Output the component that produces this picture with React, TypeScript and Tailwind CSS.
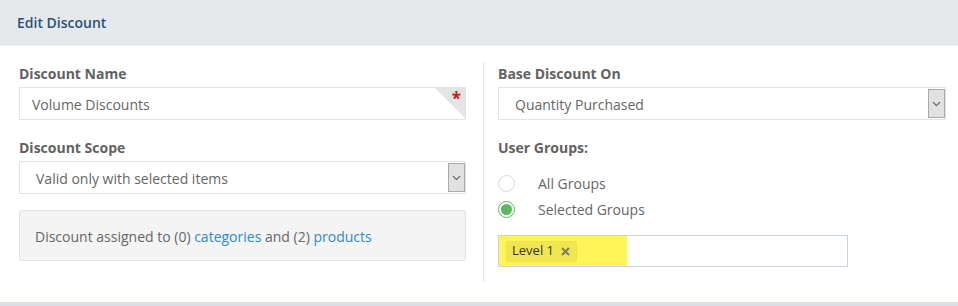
import React from "react";

function Chevron() {
  return (
    <svg width="9" height="6" viewBox="0 0 9 6" fill="none">
      <path d="M1 1.2 L4.5 4.6 L8 1.2" stroke="#555" strokeWidth="1.1" />
    </svg>
  );
}

function SelectBox({ value }: { value: string }) {
  return (
    <div className="flex h-[33px] items-stretch border border-[#e3e3e3] bg-white">
      <div className="flex flex-1 items-center pl-[16px] pt-[1px] text-[14px] text-[#666]">{value}</div>
      <div className="my-[1px] flex w-[17px] items-center justify-center border border-[#a9a9a9] bg-[#e1e1e1]">
        <Chevron />
      </div>
    </div>
  );
}

function Radio({ checked, label }: { checked?: boolean; label: string }) {
  return (
    <div className="flex h-[26px] items-center">
      {checked ? (
        <div className="flex h-[17px] w-[17px] items-center justify-center rounded-full border border-[#5cb85c] bg-white">
          <div className="h-[11px] w-[11px] rounded-full bg-[#5cb85c]" />
        </div>
      ) : (
        <div className="h-[17px] w-[17px] rounded-full border border-[#d9d9d9] bg-white" />
      )}
      <span className="ml-[23px] pt-[1px] text-[14px] text-[#666]">{label}</span>
    </div>
  );
}

export default function App() {
  return (
    <div
      className="w-[958px] h-[306px] bg-white border-b-4 border-[#dcdfe3]"
      style={{ fontFamily: '"Open Sans", "Liberation Sans", sans-serif' }}
    >
      <div className="flex h-[46px] items-center border-b border-[#eef0f2] bg-[#e6e9ec] pl-[17px]">
        <span className="text-[14px] font-semibold text-[#2b5278]">Edit Discount</span>
      </div>
      <div className="flex pt-[16px] pl-[19px]">
        <div className="w-[447px] pt-[1px]">
          <div className="flex h-[20px] items-center text-[14px] font-bold text-[#626262]">Discount Name</div>
          <div className="relative mt-[4px] flex h-[33px] items-center overflow-hidden border border-[#e3e3e3] bg-white pl-[12px] pt-[1px] text-[14px] text-[#666]">
            Volume Discounts
            <div className="absolute right-0 top-0 h-0 w-0 border-l-[30px] border-t-[30px] border-l-transparent border-t-[#e4e4e4]" />
            <span className="absolute right-[4px] top-[1px] text-[17px] font-bold leading-[20px] text-[#c81818]">*</span>
          </div>
          <div className="mt-[17px] flex h-[20px] items-center text-[14px] font-bold text-[#626262]">Discount Scope</div>
          <div className="mt-[4px]">
            <SelectBox value="Valid only with selected items" />
          </div>
          <div className="mt-[16px] flex h-[51px] items-center rounded-[3px] border border-[#e2e2e2] bg-[#f4f4f4] pl-[15px] pt-[1px] text-[14px] text-[#666]">
            <span>
              Discount assigned to (0) <span className="text-[#2a8ad2]">categories</span> and (2){" "}
              <span className="text-[#2a8ad2]">products</span>
            </span>
          </div>
        </div>
        <div className="ml-[17px] w-[1px] h-[220px] bg-[#e4e4e4]" />
        <div className="ml-[14px] w-[448px] pt-[1px]">
          <div className="flex h-[20px] items-center text-[14px] font-bold text-[#626262]">Base Discount On</div>
          <div className="mt-[4px]">
            <SelectBox value="Quantity Purchased" />
          </div>
          <div className="mt-[17px] flex h-[20px] items-center text-[14px] font-bold text-[#626262]">User Groups:</div>
          <div className="mt-[13px]">
            <Radio label="All Groups" />
            <Radio checked label="Selected Groups" />
          </div>
          <div className="mt-[13px] flex h-[32px] w-[350px] items-stretch border border-[#c9d3dd] bg-white">
            <div className="flex w-[128px] items-center bg-[#fff556] pl-[7px]">
              <div className="flex h-[21px] items-center rounded-[2px] border border-[#ece44f] bg-[#f0e650] pl-[5px] pr-[6px] text-[13px] text-[#333]">
                Level 1
                <svg className="ml-[7px]" width="9" height="9" viewBox="0 0 9 9">
                  <path d="M1 1 L8 8 M8 1 L1 8" stroke="#7d7d60" strokeWidth="2" />
                </svg>
              </div>
            </div>
          </div>
        </div>
      </div>
    </div>
  );
}
